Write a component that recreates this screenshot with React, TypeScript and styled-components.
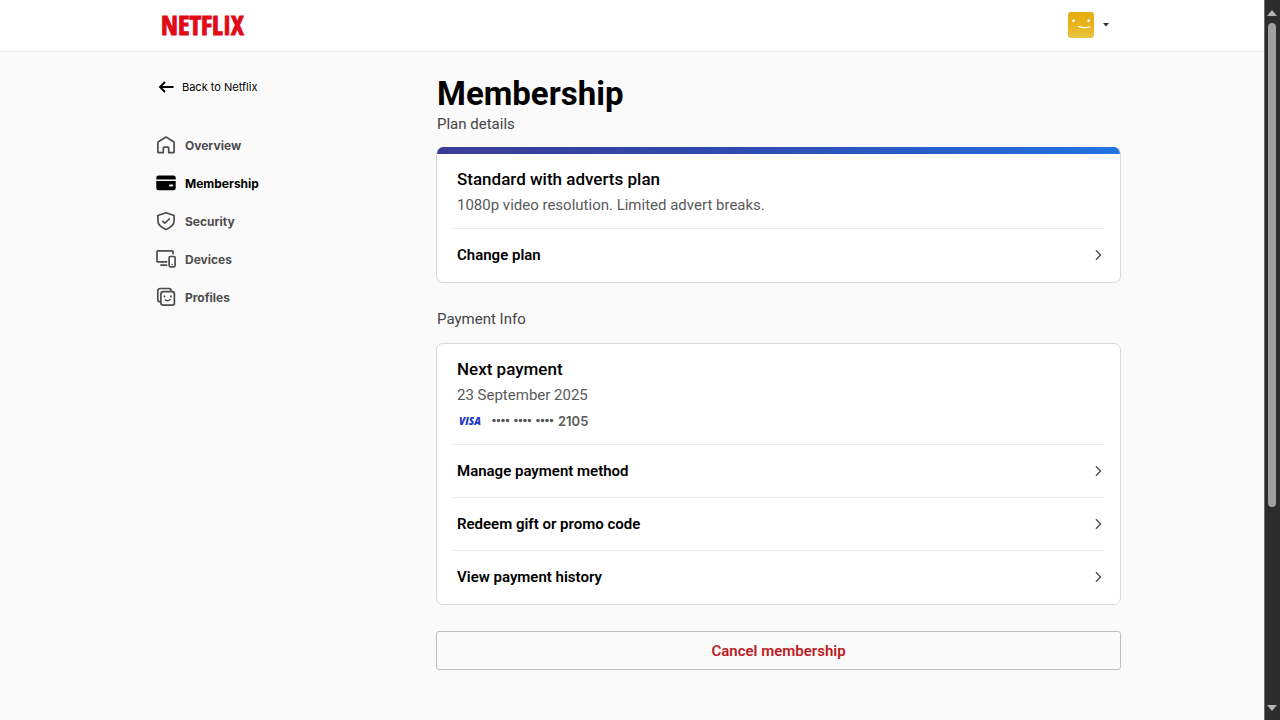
import React from "react";
import styled, { createGlobalStyle } from "styled-components";

const GlobalStyle = createGlobalStyle`
  * { box-sizing: border-box; }
  html { scrollbar-width: none; }
  body {
    margin: 0;
    background: #fafafa;
    color: #000;
    font-family: Roboto, "Liberation Sans", sans-serif;
    font-size: 15px;
  }
  h1, h2, h3, p, ul { margin: 0; padding: 0; }
  ul { list-style: none; }
  a { color: inherit; text-decoration: none; }
  button { font: inherit; cursor: pointer; }
`;

const Shell = styled.div`
  display: flex;
  align-items: flex-start;
  min-height: 100vh;
`;

const Page = styled.div`
  flex: 1;
  min-width: 0;
`;

const Header = styled.header`
  background: #fff;
  border-bottom: 1px solid #ebebeb;
`;

const Container = styled.div`
  max-width: 978px;
  margin: 0 auto;
`;

const HeaderInner = styled(Container)`
  display: flex;
  align-items: center;
  justify-content: space-between;
  height: 51px;
  padding: 0 11px 2px 18px;
`;

const Logo = styled.a`
  && { color: #e20a15; }
  font: 700 27px/48px "Open Sans Condensed", "Liberation Sans Narrow", sans-serif;
  -webkit-text-stroke: 1px currentColor;
`;

const AccountButton = styled.button`
  display: flex;
  align-items: center;
  gap: 8px;
  padding: 0;
  border: 0;
  background: none;
`;

const Body = styled(Container)`
  display: flex;
  align-items: flex-start;
  padding: 24px 0 51px 13px;
`;

const Sidebar = styled.aside`
  flex: 0 0 280px;
  font-family: Inter, "Liberation Sans", sans-serif;
`;

const BackLink = styled.a`
  display: flex;
  align-items: center;
  gap: 7px;
  height: 22px;
  padding-left: 2px;
  font-size: 11px;
`;

const NavList = styled.ul`
  margin-top: 28px;
`;

const NavLink = styled.a<{ $active?: boolean }>`
  display: flex;
  align-items: center;
  gap: 9px;
  height: 38px;
  font-size: 12px;
  font-weight: 700;
  && { color: ${(p) => (p.$active ? "#000" : "#4c4c4c")}; }
`;

const Content = styled.main`
  flex: 1;
  min-width: 0;
`;

const Title = styled.h1`
  && { padding-left: 1px; }
  font-size: 33px;
  line-height: 36px;
  font-weight: 700;
`;

const SectionTitle = styled.h2`
  && { padding-left: 1px; }
  font-size: 15px;
  line-height: 24px;
  font-weight: 400;
  color: #454545;
`;

const Section = styled.section`
  & + & { margin-top: 24px; }
`;

const Card = styled.div`
  margin-top: 12px;
  padding-bottom: 1px;
  overflow: hidden;
  background: #fff;
  border: 1px solid #d9d9d9;
  border-radius: 7px;
`;

const PlanCard = styled(Card)`
  margin-top: 11px;
  border-top: 0;
  &::before {
    content: "";
    display: block;
    height: 7px;
    margin: 0 -1px;
    background: linear-gradient(90deg, #3a3d97, #2f4bb0 45%, #2173e2);
  }
`;

const Summary = styled.div`
  padding: 12px 20px 10px;
`;

const SummaryTitle = styled.h3`
  font-size: 17px;
  line-height: 26px;
  font-weight: 500;
`;

const SummaryText = styled.p`
  line-height: 26px;
  color: #5a5a5a;
`;

const CardNumber = styled(SummaryText)`
  display: flex;
  align-items: center;
  gap: 9px;
  font-family: Inter, "Liberation Sans", sans-serif;
  font-size: 13px;
  font-weight: 600;
`;

const Dots = styled.span`
  display: inline-flex;
  align-items: center;
  gap: 4px;
`;

const RowLink = styled.a`
  display: flex;
  align-items: center;
  justify-content: space-between;
  height: 53px;
  margin: 0 16px;
  padding: 0 0 0 4px;
  border-top: 1px solid #ebebeb;
  font-weight: 600;
`;

const CancelButton = styled.button`
  width: 100%;
  height: 39px;
  margin-top: 26px;
  padding: 0;
  border: 1px solid #bdbdbd;
  border-radius: 3px;
  background: transparent;
  color: #bb1a22;
  && { font-weight: 600; }
`;

const ScrollTrack = styled.div`
  position: sticky;
  top: 0;
  flex: 0 0 16px;
  display: flex;
  flex-direction: column;
  align-items: center;
  gap: 7px;
  height: 100vh;
  padding: 10px 1px 9px 0;
  border-left: 1px solid #6e6e6e;
  background: #2c2c2c;
`;

const ScrollThumb = styled.div`
  width: 8px;
  height: 69%;
  margin-bottom: auto;
  border-radius: 5px;
  background: #9f9f9f;
`;

const Icon = ({ children }: { children: React.ReactNode }) => (
  <svg width="20" height="20" viewBox="0 0 20 20" fill="none" stroke="currentColor" strokeWidth="1.7" strokeLinejoin="round" aria-hidden="true">
    {children}
  </svg>
);

const HomeIcon = () => (
  <Icon>
    <path d="M1.900 7.600a1 1 0 0 1 .5-.9L9.500 2.300a1 1 0 0 1 1 0l7.100 4.400a1 1 0 0 1 .5.900V17a.7.700 0 0 1-.7.700h-4.700v-4.500a1 1 0 0 0-1-1H8.300a1 1 0 0 0-1 1v4.500H2.600a.7.700 0 0 1-.7-.7Z" />
  </Icon>
);

const CardIcon = () => (
  <Icon>
    <path
      stroke="none"
      fill="currentColor"
      fillRule="evenodd"
      d="M2.600 2.500h14.800A2.300 2.300 0 0 1 19.700 4.800V6.500H.3V4.800A2.300 2.300 0 0 1 2.600 2.500ZM.3 7.900h19.400v7A2.300 2.300 0 0 1 17.400 17.200H2.600A2.300 2.300 0 0 1 .3 14.900Zm13.700 3.500a.9.900 0 0 0 0 2h2.200a.9.900 0 0 0 0-2Z"
    />
  </Icon>
);

const ShieldIcon = () => (
  <Icon>
    <path d="M10 1.700 18.100 4.500v5.300c0 4-3.400 6.700-8.100 8.700-4.700-2-8.100-4.700-8.100-8.700V4.500Z" />
    <path d="m6.300 9.900 2.600 2.300 4.900-4.700" />
  </Icon>
);

const DevicesIcon = () => (
  <Icon>
    <path d="M11.200 12.900H1.900a.9.900 0 0 1-.9-.9V2.700a.9.900 0 0 1 .9-.9h14.200a.9.900 0 0 1 .9.900v2.600M4.300 16.100h6.900" />
    <rect x="13.100" y="7.500" width="6" height="10.300" rx="1.200" />
    <path d="M15.400 15.500h1.500" strokeWidth="1.200" />
  </Icon>
);

const ProfilesIcon = () => (
  <Icon>
    <path d="M4.700 14.900h-.5a2.400 2.400 0 0 1-2.400-2.400V3.900a2.400 2.400 0 0 1 2.400-2.400h8.600a2.400 2.400 0 0 1 2.400 2.400v.5" />
    <rect x="4.900" y="4.700" width="13.500" height="13.500" rx="2.400" />
    <path d="M8.800 12.500c1.600 1.500 4 1.500 5.900-.3" strokeWidth="1.500" />
    <path d="M8.500 8.500v1.700M14.900 8.500v1.700" strokeWidth="1.700" />
  </Icon>
);

const ArrowLeft = () => (
  <svg width="17" height="14" viewBox="0 0 17 14" fill="none" stroke="currentColor" strokeWidth="1.900" aria-hidden="true">
    <path d="M7 2 2 7l5 5M2 7h13.500" />
  </svg>
);

const Chevron = () => (
  <svg width="12" height="14" viewBox="0 0 12 14" fill="none" stroke="#555" strokeWidth="1.500" aria-hidden="true">
    <path d="M4 2.300 8.500 7 4 11.700" />
  </svg>
);

const Avatar = () => (
  <svg width="26" height="26" viewBox="0 0 26 26" aria-hidden="true">
    <defs>
      <linearGradient id="avatar" x1="0" y1="0" x2="0" y2="1">
        <stop offset="0" stopColor="#e6ad0e" />
        <stop offset=".6" stopColor="#e8b620" />
        <stop offset="1" stopColor="#eac549" />
      </linearGradient>
    </defs>
    <rect width="26" height="26" rx="3" fill="url(#avatar)" />
    <circle cx="5.500" cy="8.800" r="1.400" fill="#fff" />
    <circle cx="20.700" cy="8.700" r="1.400" fill="#fff" />
    <path d="M10.500 14.500c3 1.300 7.500 1.500 11.500.2" fill="none" stroke="#fff" strokeWidth="1.200" strokeLinecap="round" />
  </svg>
);

const VisaLogo = () => (
  <svg width="26" height="12" viewBox="0 0 26 12" role="img" aria-label="Visa">
    <text x="2" y="10" fill="#2337c6" fontFamily="Open Sans, sans-serif" fontSize="10" fontWeight="800" fontStyle="italic">VISA</text>
  </svg>
);

const DotGroup = () => (
  <svg width="18" height="6" viewBox="0 0 18 6" fill="currentColor" aria-hidden="true">
    {[2, 6.5, 11, 15.5].map((x) => <circle key={x} cx={x} cy="2.500" r="1.800" />)}
  </svg>
);

const ScrollArrow = ({ down }: { down?: boolean }) => (
  <svg width="10" height="6" viewBox="0 0 10 6" fill="#b3b3b3" aria-hidden="true">
    <path d={down ? "M0 0h10L5 6Z" : "M0 6h10L5 0Z"} />
  </svg>
);

const navItems = [
  { label: "Overview", icon: HomeIcon },
  { label: "Membership", icon: CardIcon, active: true },
  { label: "Security", icon: ShieldIcon },
  { label: "Devices", icon: DevicesIcon },
  { label: "Profiles", icon: ProfilesIcon },
];

const paymentLinks = ["Manage payment method", "Redeem gift or promo code", "View payment history"];

export default function App() {
  return (
    <Shell>
      <GlobalStyle />
      <Page>
        <Header>
          <HeaderInner>
            <Logo href="#">NETFLIX</Logo>
            <AccountButton type="button" aria-label="Account menu">
              <Avatar />
              <svg width="8" height="5" viewBox="0 0 8 5" fill="#333" aria-hidden="true">
                <path d="M1 1h6L4 4.500Z" />
              </svg>
            </AccountButton>
          </HeaderInner>
        </Header>
        <Body>
          <Sidebar>
            <BackLink href="#">
              <ArrowLeft />
              Back to Netflix
            </BackLink>
            <nav aria-label="Account">
              <NavList>
                {navItems.map(({ label, icon: ItemIcon, active }) => (
                  <li key={label}>
                    <NavLink href="#" $active={active} aria-current={active ? "page" : undefined}>
                      <ItemIcon />
                      {label}
                    </NavLink>
                  </li>
                ))}
              </NavList>
            </nav>
          </Sidebar>
          <Content>
            <Title>Membership</Title>
            <Section>
              <SectionTitle>Plan details</SectionTitle>
              <PlanCard>
                <Summary>
                  <SummaryTitle>Standard with adverts plan</SummaryTitle>
                  <SummaryText>1080p video resolution. Limited advert breaks.</SummaryText>
                </Summary>
                <RowLink href="#">
                  Change plan
                  <Chevron />
                </RowLink>
              </PlanCard>
            </Section>
            <Section>
              <SectionTitle>Payment Info</SectionTitle>
              <Card>
                <Summary>
                  <SummaryTitle>Next payment</SummaryTitle>
                  <SummaryText>23 September 2025</SummaryText>
                  <CardNumber>
                    <VisaLogo />
                    <Dots>
                      <DotGroup />
                      <DotGroup />
                      <DotGroup />
                      2105
                    </Dots>
                  </CardNumber>
                </Summary>
                {paymentLinks.map((label) => (
                  <RowLink href="#" key={label}>
                    {label}
                    <Chevron />
                  </RowLink>
                ))}
              </Card>
            </Section>
            <CancelButton type="button">Cancel membership</CancelButton>
          </Content>
        </Body>
      </Page>
      <ScrollTrack aria-hidden="true">
        <ScrollArrow />
        <ScrollThumb />
        <ScrollArrow down />
      </ScrollTrack>
    </Shell>
  );
}
